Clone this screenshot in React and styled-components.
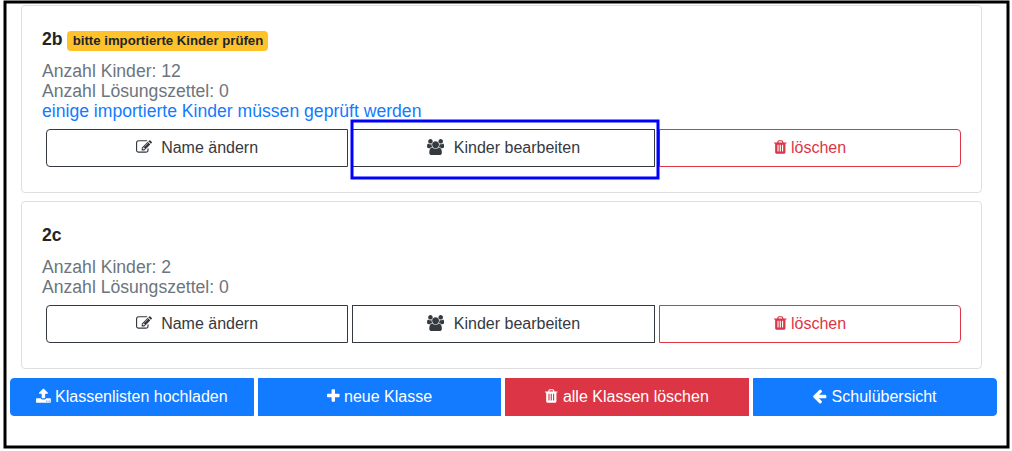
import React from "react";
import styled, { createGlobalStyle } from "styled-components";

const GlobalStyle = createGlobalStyle`
  *, *::before, *::after { box-sizing: border-box; }
  body {
    margin: 0;
    background: #fff;
    color: #212529;
    font-family: "Liberation Sans", Arial, sans-serif;
    font-size: 16px;
    line-height: 1.5;
    overflow: hidden;
  }
`;

const colors = {
  dark: "#343a40",
  danger: "#dc3545",
  primary: "#127bff",
  muted: "#6c757d",
};

const Screen = styled.main`
  position: relative;
  width: 1012px;
  height: 451px;
  padding: 5px 15.25px 0 9.75px;
`;

const Annotations = styled.svg`
  position: absolute;
  inset: 0;
  width: 100%;
  height: 100%;
  fill: none;
  stroke-width: 3px;
  pointer-events: none;
`;

const CardList = styled.div`
  display: flex;
  flex-direction: column;
  gap: 8px;
  margin: 0 14.75px 9px 11.25px;
`;

const Card = styled.section`
  height: ${(p) => p.$height}px;
  padding: 23px 20px 0;
  border: 1px solid #dfdfdf;
  border-radius: 4px;
`;

const Title = styled.h5`
  height: 22px;
  margin: 0 0 10px;
  font-size: 17.6px;
  font-weight: 700;
  line-height: 21px;
`;

const Badge = styled.span`
  display: inline-block;
  padding: 3.3px 4.7px 3.3px 5.3px;
  border-radius: 4px;
  background: #ffc22b;
  font-size: 13.2px;
  line-height: 13.2px;
  vertical-align: baseline;
`;

const Info = styled.p`
  margin: 0;
  color: ${colors.muted};
  font-size: 17.6px;
  line-height: 20px;
`;

const InfoLink = styled.a`
  display: block;
  color: ${colors.primary};
  text-decoration: none;
`;

const ButtonGroup = styled.div`
  display: flex;
  gap: 4px;
  margin: ${(p) => p.$margin || "0"};
`;

const Button = styled.button`
  flex: 1 1 0;
  height: 38px;
  padding: 0;
  border: 1px solid ${(p) => colors[p.$tone]};
  background: ${(p) => (p.$filled ? colors[p.$tone] : "transparent")};
  color: ${(p) => (p.$filled ? "#fff" : colors[p.$tone])};
  font: inherit;
  line-height: 24px;
  white-space: pre;
  &:first-child { border-radius: 4px 0 0 4px; }
  &:last-child { border-radius: 0 4px 4px 0; }
`;

const Glyph = styled.svg`
  height: 16px;
  fill: currentColor;
  vertical-align: -2px;
`;

const icons = {
  edit: {
    box: [0, 1792],
    d: "M888 1184l116-116-152-152-116 116v56h96v96h56zm440-720q-16-16-33 1l-350 350q-17 17-1 33t33-1l350-350q17-17 1-33zm80 594v190q0 119-84.5 203.5t-203.5 84.5h-832q-119 0-203.5-84.5t-84.5-203.5v-832q0-119 84.5-203.5t203.5-84.5h832q63 0 117 25 15 7 18 23 3 17-9 29l-49 49q-14 14-32 8-23-6-45-6h-832q-66 0-113 47t-47 113v832q0 66 47 113t113 47h832q66 0 113-47t47-113v-126q0-13 9-22l64-64q15-15 35-7t20 29zm-96-738l288 288-672 672h-288v-288zm444 132l-92 92-288-288 92-92q28-28 68-28t68 28l152 152q28 28 28 68t-28 68z",
  },
  users: {
    box: [-64, 1920],
    d: "M529 896q-162 5-265 128h-134q-82 0-138-40.5t-56-118.5q0-353 124-353 6 0 43.5 21t97.5 42.5 119 21.5q67 0 133-23-5 37-5 66 0 139 81 256zm1071 637q0 120-73 189.5t-194 69.5h-874q-121 0-194-69.5t-73-189.5q0-53 3.5-103.5t14-109 26.5-108.5 43-97.5 62-81 85.5-53.5 111.5-20q10 0 43 21.5t73 48 107 48 135 21.5 135-21.5 107-48 73-48 43-21.5q61 0 111.5 20t85.5 53.5 62 81 43 97.5 26.5 108.5 14 109 3.5 103.5zm-1024-1277q0 106-75 181t-181 75-181-75-75-181 75-181 181-75 181 75 75 181zm704 384q0 159-112.5 271.5t-271.5 112.5-271.5-112.5-112.5-271.5 112.5-271.5 271.5-112.5 271.5 112.5 112.5 271.5zm576 225q0 78-56 118.5t-138 40.5h-134q-103-123-265-128 81-117 81-256 0-29-5-66 66 23 133 23 59 0 119-21.5t97.5-42.5 43.5-21q124 0 124 353zm-128-609q0 106-75 181t-181 75-181-75-75-181 75-181 181-75 181 75 75 181z",
  },
  trash: {
    box: [192, 1408],
    d: "M704 1376v-704q0-14-9-23t-23-9h-64q-14 0-23 9t-9 23v704q0 14 9 23t23 9h64q14 0 23-9t9-23zm256 0v-704q0-14-9-23t-23-9h-64q-14 0-23 9t-9 23v704q0 14 9 23t23 9h64q14 0 23-9t9-23zm256 0v-704q0-14-9-23t-23-9h-64q-14 0-23 9t-9 23v704q0 14 9 23t23 9h64q14 0 23-9t9-23zm-544-992h448l-48-117q-7-9-17-11h-317q-10 2-17 11zm928 32v64q0 14-9 23t-23 9h-96v948q0 83-47 143.5t-113 60.5h-832q-66 0-113-58.5t-47-141.5v-952h-96q-14 0-23-9t-9-23v-64q0-14 9-23t23-9h309l70-167q15-37 54-63t79-26h320q40 0 79 26t54 63l70 167h309q14 0 23 9t9 23z",
  },
  upload: {
    box: [64, 1664],
    d: "M1344 1472q0-26-19-45t-45-19-45 19-19 45 19 45 45 19 45-19 19-45zm256 0q0-26-19-45t-45-19-45 19-19 45 19 45 45 19 45-19 19-45zm128-224v320q0 40-28 68t-68 28h-1472q-40 0-68-28t-28-68v-320q0-40 28-68t68-28h427q21 56 70.5 92t110.5 36h256q61 0 110.5-36t70.5-92h427q40 0 68 28t28 68zm-325-648q-17 40-59 40h-256v448q0 26-19 45t-45 19h-256q-26 0-45-19t-19-45v-448h-256q-42 0-59-40-17-39 14-69l448-448q18-19 45-19t45 19l448 448q31 30 14 69z",
  },
  plus: {
    box: [192, 1408],
    d: "M1600 736v192q0 40-28 68t-68 28h-416v416q0 40-28 68t-68 28h-192q-40 0-68-28t-28-68v-416h-416q-40 0-68-28t-28-68v-192q0-40 28-68t68-28h416v-416q0-40 28-68t68-28h192q40 0 68 28t28 68v416h416q40 0 68 28t28 68z",
  },
  back: {
    box: [170, 1536],
    d: "M1664 896v128q0 53-32.5 90.5t-84.5 37.5h-704l293 294q38 36 38 90t-38 90l-75 76q-37 37-90 37-52 0-91-37l-651-652q-37-37-37-90 0-52 37-91l651-650q38-38 91-38 52 0 90 38l75 74q38 38 38 91t-38 91l-293 293h704q52 0 84.5 37.5t32.5 90.5z",
  },
};

function Icon({ name }) {
  const { box: [x, w], d } = icons[name];
  return (
    <Glyph
      viewBox={`${x} 0 ${w} 1792`}
      width={Math.ceil((w * 16) / 1792)}
      preserveAspectRatio="xMinYMid meet"
      aria-hidden="true"
    >
      <path d={d} />
    </Glyph>
  );
}

function ClassCard({ name, badge, pupils, slips, link, height }) {
  return (
    <Card $height={height}>
      <Title>{name}{badge && <> <Badge>{badge}</Badge></>}</Title>
      <Info>Anzahl Kinder: {pupils}</Info>
      <Info>Anzahl Lösungszettel: {slips}</Info>
      {link && <Info><InfoLink>{link}</InfoLink></Info>}
      <ButtonGroup $margin="8px 0 0 4px">
        <Button $tone="dark"><Icon name="edit" />{"\u00a0 Name ändern"}</Button>
        <Button $tone="dark"><Icon name="users" />{"\u00a0 Kinder bearbeiten"}</Button>
        <Button $tone="danger"><Icon name="trash" /> löschen</Button>
      </ButtonGroup>
    </Card>
  );
}

export default function App() {
  return (
    <>
      <GlobalStyle />
      <Screen>
        <CardList>
          <ClassCard
            name="2b"
            badge="bitte importierte Kinder prüfen"
            pupils={12}
            slips={0}
            link="einige importierte Kinder müssen geprüft werden"
            height={188}
          />
          <ClassCard name="2c" pupils={2} slips={0} height={168} />
        </CardList>
        <ButtonGroup>
          <Button $filled $tone="primary"><Icon name="upload" /> Klassenlisten hochladen</Button>
          <Button $filled $tone="primary"><Icon name="plus" /> neue Klasse</Button>
          <Button $filled $tone="danger"><Icon name="trash" /> alle Klassen löschen</Button>
          <Button $filled $tone="primary"><Icon name="back" /> Schulübersicht</Button>
        </ButtonGroup>
        <Annotations aria-hidden="true">
          <rect x="5" y="2" width="1003" height="445" stroke="#000" />
          <rect x="352" y="121" width="306" height="57" stroke="#00f" />
        </Annotations>
      </Screen>
    </>
  );
}
